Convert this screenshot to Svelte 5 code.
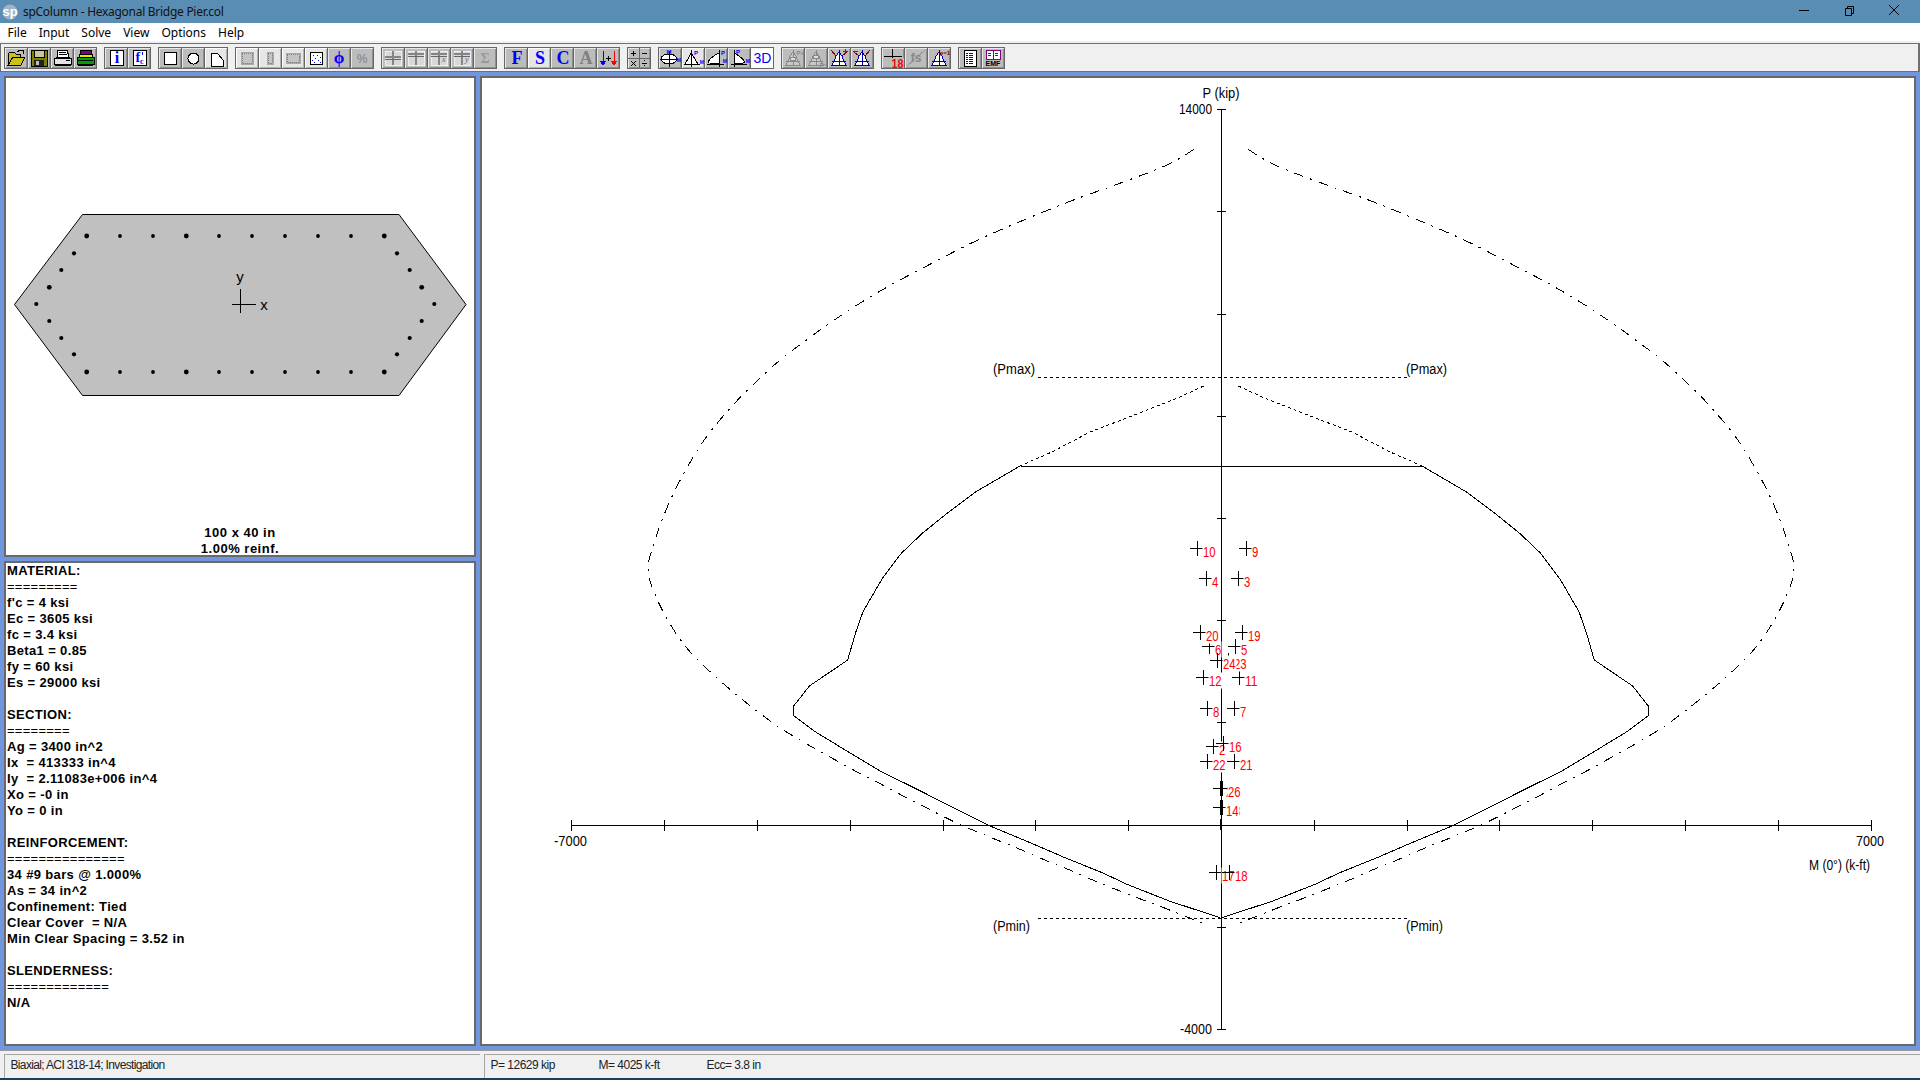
<script>
  const serif = 'font-family="Liberation Serif" font-weight="bold"';
  const sans = 'font-family="Liberation Sans"';
  const page = '<rect x="5.5" y="2.5" width="13" height="15" fill="#fff" stroke="#000" stroke-width="1"/>';
  const bell = (c, s) => `<path d="M11 4 C8 7 7 10 6 13 C5 15 5 16 4 17 H18 C17 16 17 15 16 13 C15 10 14 7 11 4 Z" fill="${c}" stroke="${s}"/><path d="M11 2 V18 M4 13 H18" stroke="${s}" fill="none"/>`;
  const beam = (y, extra = '') => `<rect x="3" y="3" width="16" height="14" fill="#d8d8d8" stroke="#efefef"/><path d="M3 ${y} H19 M10.5 3 V17" stroke="#858585" stroke-width="2" fill="none"/><path d="M3 ${y + 2} H19" stroke="#666" fill="none"/>${extra}`;
  const col = (x, y, w, h, dots = '#808080') => `<rect x="${x}" y="${y}" width="${w}" height="${h}" fill="#a9a9a9" stroke="#e6e6e6"/><rect x="${x + 2}" y="${y + 2}" width="${w - 4}" height="${h - 4}" fill="#c4c4c4" stroke="${dots}" stroke-dasharray="1 1"/>`;

  const icons = {
    open: '<path d="M3 17 V6 L5 4 H9 L11 6 H15 V9 H8 L3 17 H16 L20 9 H8" fill="#c9c21c" stroke="#000"/><path d="M12 4 Q15 1 19 3 M19 3 L16 2 M19 3 L18 6" stroke="#000" fill="none"/>',
    save: '<rect x="3" y="2" width="16" height="16" fill="#808000" stroke="#000"/><rect x="6" y="2.5" width="10" height="7" fill="#c8c8a0" stroke="#000"/><rect x="6" y="12" width="10" height="6" fill="#222"/><rect x="8" y="13" width="3" height="4" fill="#c0c0c0"/>',
    print: '<path d="M7 2 H16 L18 9 H6 Z" fill="#fff" stroke="#000"/><path d="M8 4 H15 M8 6 H16" stroke="#000"/><path d="M3 10 H20 V16 H3 Z" fill="#e4e4e4" stroke="#000"/><path d="M4 17 H20 V18 H4 Z" fill="#000"/><path d="M15 12 H19" stroke="#000"/>',
    print2: '<rect x="6" y="2" width="11" height="4" fill="#800080" stroke="#000"/><path d="M5 6 H18 V9 H5 Z" fill="#e6e600" stroke="#000"/><rect x="3" y="9" width="17" height="7" fill="#00a000" stroke="#000"/><path d="M4 12 H19 M4 17 H19" stroke="#000"/>',
    info: `${page}<text x="12" y="15" text-anchor="middle" ${serif} font-size="16" fill="#00f">i</text>`,
    fc: `${page}<text x="7.5" y="14" ${serif} font-size="14" fill="#00f">f</text><text x="12" y="16" ${serif} font-size="8" fill="#00f">c</text><path d="M14 4 V7" stroke="#00f"/>`,
    square: '<rect x="5.5" y="4.5" width="12" height="12" fill="#fff" stroke="#000"/>',
    circle: '<circle cx="11.5" cy="10.5" r="5.5" fill="#fff" stroke="#000"/>',
    poly: '<path d="M6.5 5.5 H12.5 L18.5 12.5 V18 H6.5 Z" fill="#fff" stroke="#000"/>',
    c1: col(4, 3, 14, 14),
    c2: col(7, 3, 8, 14),
    c3: col(3, 4, 16, 12),
    dots: '<rect x="5.5" y="4.5" width="12" height="12" fill="#fff" stroke="#000"/><path d="M8 7 h1 M12 7 h1 M15 9 h1 M10 10 h1 M7 12 h1 M13 12 h1 M9 14 h1 M15 14 h1" stroke="#00f"/>',
    phi: `<text x="11" y="15" text-anchor="middle" ${serif} font-size="17" fill="#00f">ϕ</text>`,
    pct: `<text x="11" y="15" text-anchor="middle" ${sans} font-size="12" fill="#808080">%</text>`,
    b1: beam(9),
    b2: beam(6),
    b3: beam(6, `<text x="14" y="14" font-family="Liberation Serif" font-style="italic" font-size="8" fill="#666">x</text>`),
    b4: beam(6, `<text x="14" y="14" font-family="Liberation Serif" font-style="italic" font-size="8" fill="#666">y</text>`),
    sig: `<text x="11" y="15" text-anchor="middle" ${serif} font-size="14" fill="#999">Σ</text>`,
    F: `<text x="12" y="16" text-anchor="middle" ${serif} font-size="18" fill="#00f">F</text>`,
    S: `<text x="12" y="16" text-anchor="middle" ${serif} font-size="18" fill="#00f">S</text>`,
    C: `<text x="12" y="16" text-anchor="middle" ${serif} font-size="18" fill="#00f">C</text>`,
    A: `<text x="12" y="16" text-anchor="middle" ${serif} font-size="18" fill="#808080">A</text>`,
    arrows: '<path d="M6 3 V16 M3.5 13 L6 17 L8.5 13 Z" stroke="#00f" fill="#00f"/><path d="M17 3 V16 M14.5 13 L17 17 L19.5 13 Z" stroke="#f00" fill="#f00"/><path d="M9 10 H14 M11.5 7.5 V12.5" stroke="#000"/>',
    calc: '<path d="M0 10 H22 M11 0 V20" stroke="#666"/><path d="M3 5 H8 M5.5 2.5 V7.5 M14 5 H19 M3 13 L8 18 M8 13 L3 18 M14 15 H19" stroke="#000" fill="none"/><path d="M16 12.5 h1 M16 17.5 h1" stroke="#000"/>',
    ell: `<ellipse cx="10" cy="11" rx="8" ry="5" fill="#fff" stroke="#000"/><path d="M10 3 V19 M1 11 H19" stroke="#000"/><text x="10" y="6" text-anchor="middle" ${sans} font-weight="bold" font-size="6" fill="#00f">M</text><text x="22" y="14" text-anchor="end" ${sans} font-weight="bold" font-size="5" fill="#00f">M</text>`,
    bell1: `<path d="M9 5 C7 9 5 13 3 16 H16 C14 13 12 9 9 5 Z" fill="#fff" stroke="#000"/><path d="M9 2 V19 M2 16 H18" stroke="#000"/><text x="12" y="7" ${sans} font-weight="bold" font-size="6" fill="#00f">P</text><text x="22" y="16" text-anchor="end" ${sans} font-weight="bold" font-size="5" fill="#00f">M</text>`,
    bell2: `<path d="M14 5 C10 7 5 10 3 14 C4 16 10 16 14 16 Z" fill="#fff" stroke="#000"/><path d="M14 2 V19 M2 16 H19" stroke="#000"/><text x="16" y="7" ${sans} font-weight="bold" font-size="6" fill="#00f">P</text><text x="22" y="15" text-anchor="end" ${sans} font-weight="bold" font-size="5" fill="#00f">M</text>`,
    bell3: `<path d="M6 5 C10 7 15 11 17 14 C15 16 10 16 6 16 Z" fill="#fff" stroke="#000"/><path d="M6 2 V19 M3 16 H19" stroke="#000"/><text x="8" y="6" ${sans} font-weight="bold" font-size="6" fill="#00f">P</text><text x="22" y="15" text-anchor="end" ${sans} font-weight="bold" font-size="5" fill="#00f">M</text>`,
    three: `<text x="11.5" y="15" text-anchor="middle" ${sans} font-size="14" fill="#00f">3D</text>`,
    gp: `${bell('#c8c8c8', '#888')}<ellipse cx="11" cy="11" rx="3" ry="2" fill="#e0e0e0" stroke="#888"/><text x="22" y="7" text-anchor="end" ${sans} font-weight="bold" font-size="6" fill="#888">P+</text>`,
    gm: `${bell('#c8c8c8', '#888')}<ellipse cx="11" cy="9" rx="3" ry="2" fill="#e0e0e0" stroke="#888"/><text x="22" y="19" text-anchor="end" ${sans} font-weight="bold" font-size="6" fill="#888">P−</text>`,
    bp: `${bell('#fff', '#00a')}<path d="M3 2 L8 8 M19 4 L14 8" stroke="#800000" fill="none"/><path d="M15 3 H20 M17.5 1 V5" stroke="#c00"/>`,
    bm: `${bell('#fff', '#00a')}<path d="M3 4 L8 8 M19 2 L14 8" stroke="#800000" fill="none"/><path d="M2 3 H7" stroke="#c00"/>`,
    pt: `<path d="M2 8 H20 M10 1 V16" stroke="#000"/><rect x="9" y="10" width="13" height="10" fill="#bcbcbc"/><text x="9.5" y="19.5" textLength="12" lengthAdjust="spacingAndGlyphs" ${sans} font-weight="bold" font-size="12" fill="#f00">18</text>`,
    fs: `<path d="M2 18 L20 2" stroke="#999"/><text x="11" y="14" text-anchor="middle" ${sans} font-weight="bold" font-size="12" fill="#888">fs</text>`,
    phi1: `${bell('#fff', '#00a')}<text x="22" y="7" text-anchor="end" ${sans} font-weight="bold" font-size="6" fill="#800000">φ=1</text>`,
    doc: '<rect x="5" y="2" width="12" height="16" fill="#fff" stroke="#000"/><path d="M7 5 H15 M7 7 H15 M7 9 H15 M7 11 H15 M7 13 H15 M7 15 H15" stroke="#00f" stroke-dasharray="2 .5"/>',
    emf: `<path d="M4 2 H11 V11 H4 Z M11 2 H18 V11 H11 Z" fill="#fff" stroke="#800080"/><path d="M6 5 H9 M6 7 H9 M13 5 H16 M13 7 H16" stroke="#800080"/><text x="11" y="18" text-anchor="middle" ${sans} font-weight="bold" font-size="7" fill="#000">EMF</text>`
  };

  const toolbar = [
    [['open'], ['save'], ['print'], ['print2']],
    [['info'], ['fc']],
    [['square'], ['circle'], ['poly', 1]],
    [['c1', 1], ['c2', 1], ['c3', 1], ['dots', 1], ['phi'], ['pct']],
    [['b1'], ['b2'], ['b3'], ['b4'], ['sig']],
    [['F'], ['S', 1], ['C'], ['A'], ['arrows']],
    [['calc']],
    [['ell'], ['bell1', 1], ['bell2'], ['bell3'], ['three', 2]],
    [['gp'], ['gm'], ['bp'], ['bm']],
    [['pt'], ['fs'], ['phi1']],
    [['doc'], ['emf']]
  ];

  const menu = ['File', 'Input', 'Solve', 'View', 'Options', 'Help'];

  const info = [
    'MATERIAL:', '=========', "f'c = 4 ksi", 'Ec = 3605 ksi', 'fc = 3.4 ksi', 'Beta1 = 0.85', 'fy = 60 ksi', 'Es = 29000 ksi', '',
    'SECTION:', '========', 'Ag = 3400 in^2', 'Ix  = 413333 in^4', 'Iy  = 2.11083e+006 in^4', 'Xo = -0 in', 'Yo = 0 in', '',
    'REINFORCEMENT:', '===============', '34 #9 bars @ 1.000%', 'As = 34 in^2', 'Confinement: Tied', 'Clear Cover  = N/A', 'Min Clear Spacing = 3.52 in', '',
    'SLENDERNESS:', '=============', 'N/A'
  ];

  const hexagon = '82.5,214.5 399,214.5 466,304.5 399,395.5 82.5,395.5 14.5,304.5';
  const rowX = [86.7, 120, 153, 186.3, 219, 252, 285, 318, 351, 384.3];
  const big = [86.7, 186.3, 384.3];
  const bars = [
    ...rowX.flatMap((x) => [[x, 236, big.includes(x) ? 2.4 : 1.9], [x, 372, big.includes(x) ? 2.4 : 1.9]]),
    [74, 253.3, 2.1], [61.3, 270, 2.1], [49.3, 287.3, 2.4], [36.3, 304, 2.1], [49.3, 321, 2.1], [61.3, 338, 2.1], [74, 354.3, 2.1],
    [397, 253.3, 2.1], [409.7, 270, 2.1], [421.7, 287.3, 2.4], [434.3, 304, 2.1], [421.7, 321, 2.1], [409.7, 338, 2.1], [397, 354.3, 2.1]
  ];

  const outerRight = [[1248, 149.3], [1274.8, 165], [1320.7, 182.7], [1368.5, 200], [1416.3, 219.3], [1464.2, 240], [1512, 264.3], [1561.8, 291], [1607.7, 320], [1655.5, 355], [1680.4, 376.7], [1709, 405], [1737.8, 440], [1760.8, 478.3], [1776, 510], [1788, 543.3], [1794, 570], [1786, 596.7], [1772.3, 623.3], [1755, 648.3], [1732, 671.7], [1707.2, 693.3], [1684.2, 711.7], [1661.3, 728.3], [1636.4, 743.3], [1611.5, 757.3], [1588.6, 770], [1563.7, 782.7], [1540.7, 795], [1515.9, 807.7], [1492.9, 819.3], [1479.5, 825.7], [1445, 840], [1420.2, 850], [1397.2, 860], [1372.3, 870], [1349.4, 880], [1326.4, 889.3], [1301.5, 899], [1276.7, 908.3], [1255.6, 916.7], [1236.5, 924.3]];
  const dottedRight = [[1238.4, 386], [1261.4, 396.7], [1301.5, 412.7], [1351.3, 431.7], [1389.6, 451.7], [1422, 466]];
  const solidRight = [[1422, 466], [1466, 491.7], [1492.9, 511.7], [1519.7, 533.3], [1540.7, 553.3], [1560, 579], [1579, 611.7], [1586.6, 633.3], [1594.3, 660], [1632.6, 686], [1648.3, 706], [1648.3, 715.7], [1626.8, 731.7], [1588.6, 755], [1561.8, 771], [1523.5, 790], [1477.6, 813.3], [1452.7, 825.7], [1408.7, 844], [1378, 857.3], [1339.8, 872.7], [1315, 884.3], [1272.8, 901], [1225, 916.7], [1221, 918.5]];

  const line = (pts) => pts.map((p) => p.join(',')).join(' ');
  const mirror = (pts) => pts.map(([x, y]) => [2442 - x, y]);
  const smooth = (pts, steps = 5) => {
    const out = [];
    for (let i = 0; i < pts.length - 1; i++) {
      const [p0, p1, p2, p3] = [pts[Math.max(i - 1, 0)], pts[i], pts[i + 1], pts[Math.min(i + 2, pts.length - 1)]];
      for (let s = 0; s < steps; s++) {
        const t = s / steps;
        const f = (a, b, c, d) => 0.5 * (2 * b + (c - a) * t + (2 * a - 5 * b + 4 * c - d) * t * t + (3 * b - a - 3 * c + d) * t * t * t);
        out.push([+f(p0[0], p1[0], p2[0], p3[0]).toFixed(1), +f(p0[1], p1[1], p2[1], p3[1]).toFixed(1)]);
      }
    }
    out.push(pts[pts.length - 1]);
    return out;
  };
  const outerSmooth = smooth(outerRight);

  const xTicks = Array.from({ length: 15 }, (_, i) => Math.round(1221 + (i - 7) * 92.8) + 0.5);
  const yTicks = [109.5, 211.5, 314.5, 416.5, 518.5, 620.5, 722.5, 927.5, 1029.5];

  const points = [
    ['2', 1212.7, 745.7], ['3', 1238.3, 577.7], ['4', 1206.3, 577.7], ['5', 1235.3, 646], ['6', 1209.3, 646],
    ['7', 1233.7, 708.3], ['8', 1207.3, 708.3], ['9', 1246.3, 547.7], ['10', 1196.7, 547.7], ['11', 1238.7, 676.7],
    ['12', 1202.7, 676.7], ['13', 1222.2, 806.7], ['14', 1219.8, 806.7], ['16', 1223.3, 742.7], ['17', 1215.7, 872.3],
    ['18', 1228.7, 872.3], ['19', 1241.7, 631.7], ['20', 1200.3, 631.7], ['21', 1233.7, 760.7], ['22', 1207.3, 760.7],
    ['23', 1228.3, 660], ['24', 1217.3, 660], ['25', 1219.8, 788], ['26', 1222.2, 788]
  ].map(([n, x, y]) => [n, Math.round(x) + 0.5, Math.round(y) + 0.5]);
</script>

<div class="window">
  <header class="title">
    <svg class="logo" width="18" height="18" viewBox="0 0 18 18">
      <circle cx="9" cy="9" r="7.5" fill="#9fb4c6" />
      <text x="9" y="13" text-anchor="middle" class="logo-text">sp</text>
    </svg>
    <span class="title-text">spColumn - Hexagonal Bridge Pier.col</span>
    <div class="controls">
      <svg width="46" height="23" viewBox="0 0 46 23"><path d="M20 10.5 H30" stroke="#000" /></svg>
      <svg width="46" height="23" viewBox="0 0 46 23"><path d="M20.5 8.5 H26.5 V15.5 H20.5 Z M22.5 8.5 V6.5 H28.5 V13.5 H26.5" stroke="#000" fill="none" /></svg>
      <svg width="46" height="23" viewBox="0 0 46 23"><path d="M18 5 L28 15 M28 5 L18 15" stroke="#000" fill="none" /></svg>
    </div>
  </header>

  <nav class="menu">
    {#each menu as item}<span class="menu-item">{item}</span>{/each}
  </nav>

  <div class="toolbar">
    {#each toolbar as group}
      <div class="group">
        {#each group as [icon, state]}
          <button class="tool" class:latched={state === 1} class:white={state === 2} aria-label={icon}>
            <svg width="22" height="20" viewBox="0 0 22 20" shape-rendering="crispEdges">{@html icons[icon]}</svg>
          </button>
        {/each}
      </div>
    {/each}
  </div>

  <main class="client">
    <section class="panel section-view">
      <svg width="468" height="477" viewBox="6 78 468 477">
        <polygon points={hexagon} fill="#c0c0c0" stroke="#000" />
        {#each bars as [cx, cy, r]}
          <circle {cx} {cy} {r} fill="#000" />
        {/each}
        <path d="M232 304.5 H256 M240.5 289 V313" stroke="#000" fill="none" shape-rendering="crispEdges" />
        <text x="240" y="282" text-anchor="middle" class="axis-name">y</text>
        <text x="264" y="310" text-anchor="middle" class="axis-name">x</text>
        <text x="240" y="536.5" text-anchor="middle" class="caption">100 x 40 in</text>
        <text x="240" y="552.5" text-anchor="middle" class="caption">1.00% reinf.</text>
      </svg>
    </section>

    <section class="panel chart">
      <svg width="1432" height="966" viewBox="482 78 1432 966">
        <g shape-rendering="crispEdges" stroke="#000" fill="none">
          <path d="M1221.5 109 V1030 M571 825.5 H1871" />
          {#each xTicks as x}<path d="M{x} 820 V831" />{/each}
          {#each yTicks as y}<path d="M1217 {y} H1226" />{/each}
          <path d="M1038 377.5 H1407 M1038 918.5 H1407" stroke-dasharray="3 3" />
          <path d="M1021 466.5 H1422" />
          <polyline points={line(solidRight)} />
          <polyline points={line(mirror(solidRight))} />
          <polyline points={line(dottedRight)} stroke-dasharray="3 3" />
          <polyline points={line(mirror(dottedRight))} stroke-dasharray="3 3" />
          <polyline points={line(outerSmooth)} stroke-dasharray="10 7 2 7" />
          <polyline points={line(mirror(outerSmooth))} stroke-dasharray="10 7 2 7" />
          <path d="M1220.5 819 V830" />
        </g>

        <g class="chart-text">
          <text x="1221" y="98" text-anchor="middle" textLength="37" lengthAdjust="spacingAndGlyphs">P (kip)</text>
          <text x="1212" y="114" text-anchor="end" textLength="33" lengthAdjust="spacingAndGlyphs">14000</text>
          <text x="1212" y="1034" text-anchor="end" textLength="32" lengthAdjust="spacingAndGlyphs">-4000</text>
          <text x="554" y="846" textLength="33" lengthAdjust="spacingAndGlyphs">-7000</text>
          <text x="1856" y="846" textLength="28" lengthAdjust="spacingAndGlyphs">7000</text>
          <text x="1809" y="870" textLength="61" lengthAdjust="spacingAndGlyphs">M (0°) (k-ft)</text>
          <text x="993" y="374" textLength="42" lengthAdjust="spacingAndGlyphs">(Pmax)</text>
          <text x="1406" y="374" textLength="41" lengthAdjust="spacingAndGlyphs">(Pmax)</text>
          <text x="993" y="931" textLength="37" lengthAdjust="spacingAndGlyphs">(Pmin)</text>
          <text x="1406" y="931" textLength="37" lengthAdjust="spacingAndGlyphs">(Pmin)</text>
        </g>

        {#each points as [n, x, y]}
          <path d="M{x - 7.5} {y} H{x + 7.5} M{x} {y - 7.5} V{y + 7.5}" stroke="#000" fill="none" shape-rendering="crispEdges" />
          <rect x={x + 5} y={y - 5} width={n.length * 7} height="16" fill="#fff" />
          <text x={x + 5.5} y={y + 8.5} textLength={n.length * 6.3} lengthAdjust="spacingAndGlyphs" class="point-label">{n}</text>
        {/each}
      </svg>
    </section>

    <section class="panel report">
      {#each info as row}
        <div class="row" class:rule={row.startsWith('=')}>{row}</div>
      {/each}
    </section>
  </main>

  <footer class="status">
    <div class="pane first">Biaxial; ACI 318-14; Investigation</div>
    <div class="pane second">
      <span class="cell p">P= 12629 kip</span>
      <span class="cell m">M= 4025 k-ft</span>
      <span>Ecc= 3.8 in</span>
    </div>
  </footer>
</div>

<style>
  :global(body) { margin: 0; background: #f0f0f0; }
  .window { width: 1920px; height: 1080px; display: flex; flex-direction: column; overflow: hidden; font-family: "Liberation Sans", sans-serif; }

  .title { height: 23px; flex: none; background: #5a8db4; display: flex; align-items: center; padding-left: 1px; box-sizing: border-box; }
  .logo-text { font: bold 13px "Liberation Sans", sans-serif; fill: #fff; }
  .title-text { font: 12px "Noto Sans", sans-serif; color: #111; margin-left: 4px; letter-spacing: -0.28px; }
  .controls { margin-left: auto; display: flex; padding-right: 3px; }
  .controls svg { display: block; }

  .menu { height: 18px; flex: none; background: #fff; display: flex; align-items: center; padding-left: 1.5px; font: 12px "Noto Sans", sans-serif; color: #000; }
  .menu-item { padding: 0 6px; }

  .toolbar { height: 31px; flex: none; box-sizing: border-box; background: #f0f0f0; margin: 0; border: solid #f0f0f0; border-width: 2px 0 0; display: flex; gap: 7px; padding: 4px 0 0 4px; box-shadow: inset 0 1px 0 #707070, inset 0 -1px 0 #707070, inset 1px 0 0 #707070, inset -2px 0 0 #707070; }
  .group { display: flex; height: 22px; box-sizing: border-box; border: solid #666; border-width: 1px 0 1px 1px; }
  .tool { width: 23px; height: 20px; padding: 0; border: 0; border-right: 1px solid #666; box-sizing: border-box; background: #bcbcbc; box-shadow: inset 1px 1px 0 #e8e8e8, inset -1px -1px 0 #8e8e8e; display: block; }
  .tool svg { display: block; }
  .tool.latched { background: #e6e6e6; box-shadow: inset 1px 1px 0 #fff, inset -1px -1px 0 #b0b0b0; }
  .tool.white { background: #fff; box-shadow: none; }

  .client { flex: none; height: 978px; box-sizing: border-box; background: #7097dd; padding: 4px; display: grid; grid-template-columns: 472px 1436px; grid-template-rows: 481px 485px; gap: 4px; }
  .panel { background: #fff; border: 2px solid #696969; box-sizing: border-box; overflow: hidden; }
  .panel svg { display: block; }
  .chart { grid-column: 2; grid-row: 1 / span 2; }
  .section-view { grid-column: 1; grid-row: 1; }
  .report { grid-column: 1; grid-row: 2; font: bold 13px/16px "Liberation Sans", sans-serif; color: #000; padding-left: 1px; letter-spacing: 0.36px; }
  .row { height: 16px; white-space: pre; }
  .row.rule { font-weight: normal; letter-spacing: 0.26px; }

  .axis-name { font: 15px "Liberation Sans", sans-serif; fill: #000; }
  .caption { font: bold 13px "Liberation Sans", sans-serif; fill: #000; letter-spacing: 0.5px; }
  .chart-text text { font: 14px "Liberation Sans", sans-serif; fill: #000; }
  .point-label { font: 15px "Liberation Sans", sans-serif; fill: #f00; }

  .status { flex: 1; box-sizing: border-box; background: #f0f0f0; border-top: 1px solid #9a9a9a; border-bottom: 2px solid #1c3e5c; padding-top: 3px; display: flex; font: 12px "Liberation Sans", sans-serif; color: #222; }
  .pane { box-sizing: border-box; border: solid #a6a6a6; border-width: 1px 0 0 1px; display: flex; align-items: center; padding: 0 0 3px 5.5px; white-space: pre; letter-spacing: -0.5px; }
  .first { width: 476px; margin-left: 4px; letter-spacing: -0.65px; }
  .second { flex: 1; margin-left: 4px; }
  .cell { display: block; }
  .p { width: 108px; }
  .m { width: 108px; }
</style>
